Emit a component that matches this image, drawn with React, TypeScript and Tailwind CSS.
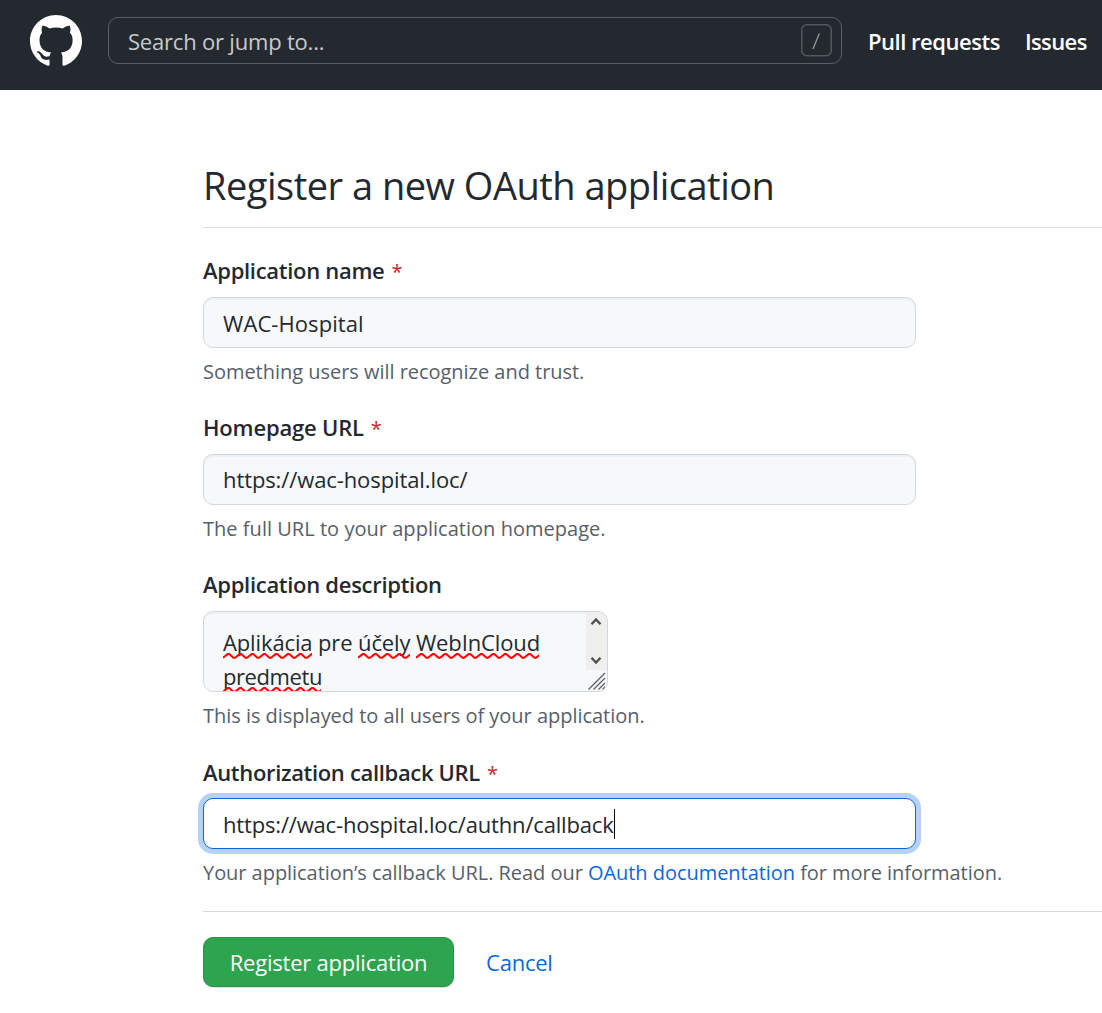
import type { ReactNode } from "react";

function Label({ children, required, className }: { children: ReactNode; required?: boolean; className: string }) {
  return (
    <div className={`flex h-[34px] items-baseline whitespace-pre text-[22px] leading-[34px] font-semibold text-[#24292f] ${className}`}>
      <span>{children}</span>
      {required && <span className="ml-[7px] text-[20px] font-normal tracking-normal text-[#cf222e]">*</span>}
    </div>
  );
}

function Help({ children }: { children: ReactNode }) {
  return <p className="mt-[9px] h-[29px] whitespace-pre text-[20px] leading-[30px] tracking-[-0.03px] text-[#57606a]">{children}</p>;
}

const fieldBox =
  "flex h-[51px] w-[713px] items-center rounded-[10px] border border-[#d0d7de] bg-[#f6f8fa] pl-[19px] text-[22px] text-[#24292f] shadow-[inset_0_2px_0_rgba(208,215,222,0.2)]";

/* Spell-checker underline: one wave every 12px, clipped to the word. */
function Squiggle({ width }: { width: number }) {
  let d = "M0 4.8";
  for (let x = 0; x < width; x += 12) d += "l4.7 -3.7h1.5l4.3 3.7h1.5";
  return (
    <svg className="absolute top-[28px] left-0 h-[6px] overflow-hidden" width={width} height="6" fill="none">
      <path d={d} stroke="#ff0000" strokeWidth="2" strokeLinejoin="round" />
    </svg>
  );
}

function Misspelled({ children, width }: { children: ReactNode; width: number }) {
  return (
    <span className="relative inline-block">
      {children}
      <Squiggle width={width} />
    </span>
  );
}

export default function App() {
  return (
    <div className="h-[1013px] w-[1102px] overflow-hidden bg-white font-['Open_Sans',sans-serif] text-[#24292f]">
      <header className="flex h-[90px] items-start bg-[#24292f] text-white">
        <svg className="mt-[15px] ml-[30px] size-[52px] shrink-0" viewBox="0 0 16 16" fill="currentColor">
          <path
            fillRule="evenodd"
            d="M8 0C3.58 0 0 3.58 0 8c0 3.54 2.29 6.53 5.47 7.59.4.07.55-.17.55-.38 0-.19-.01-.82-.01-1.49-2.01.37-2.53-.49-2.69-.94-.09-.23-.48-.94-.82-1.13-.28-.15-.68-.52-.01-.53.63-.01 1.08.58 1.23.82.72 1.21 1.87.87 2.33.66.07-.52.28-.87.51-1.07-1.78-.2-3.64-.89-3.64-3.95 0-.87.31-1.59.82-2.15-.08-.2-.36-1.02.08-2.12 0 0 .67-.21 2.2.82.64-.18 1.32-.27 2-.27.68 0 1.36.09 2 .27 1.53-1.04 2.2-.82 2.2-.82.44 1.1.16 1.92.08 2.12.51.56.82 1.27.82 2.15 0 3.07-1.87 3.75-3.65 3.95.29.25.54.73.54 1.48 0 1.07-.01 1.93-.01 2.2 0 .21.15.46.55.38A8.013 8.013 0 0016 8c0-4.42-3.58-8-8-8z"
          />
        </svg>
        <div className="mt-[17px] ml-[26px] flex h-[47px] w-[734px] shrink-0 items-start justify-between rounded-[10px] border border-[#57606a] pr-[9px] pl-[19px]">
          <span className="mt-[6px] text-[22px] leading-[34px] tracking-[-0.2px] text-[#c8c9cb]">Search or jump to...</span>
          <svg className="mt-[6px] h-[33px] w-[31px]" viewBox="0 0 31 33" fill="none">
            <rect x="0.8" y="0.8" width="29.4" height="31" rx="5" stroke="#55595e" strokeWidth="1.5" />
            <path d="M18.3 9.5L12 25" stroke="#979a9c" strokeWidth="1.3" />
          </svg>
        </div>
        <nav className="mt-[24px] ml-[26px] flex gap-[25px] text-[22px] leading-[34px] font-semibold whitespace-pre">
          <a className="tracking-[-0.48px]">Pull requests</a>
          <a className="tracking-[-0.6px]">Issues</a>
        </nav>
      </header>

      <main className="ml-[203px] flex flex-col pt-[68px]">
        <h1 className="h-[70px] border-b border-[#d8dee4] text-[38px] leading-[54px] font-normal tracking-[-0.5px]">
          Register a new OAuth application
        </h1>

        <Label required className="mt-[25px] tracking-[-0.3px]">Application name</Label>
        <div className={`mt-[10px] ${fieldBox} pt-[2px] tracking-[0.08px]`}>WAC-Hospital</div>
        <Help>Something users will recognize and trust.</Help>

        <Label required className="mt-[24px] tracking-[-0.18px]">Homepage URL</Label>
        <div className={`mt-[10px] ${fieldBox} tracking-[-0.1px]`}>https://wac-hospital.loc/</div>
        <Help><span className="tracking-[0.03px]">The full URL to your application homepage.</span></Help>

        <Label className="mt-[24px] tracking-[-0.29px]">Application description</Label>
        <div className="mt-[10px] flex h-[81px] w-[405px] justify-between overflow-hidden rounded-[10px] border border-[#d0d7de] bg-[#f6f8fa] pl-[19px] text-[22px] leading-[34px] shadow-[inset_0_2px_0_rgba(208,215,222,0.2)]">
          <div className="pt-[13px] whitespace-pre">
            <div className="h-[34px] tracking-[-0.13px]">
              <Misspelled width={89}>Aplikácia</Misspelled> pre <Misspelled width={52}>účely</Misspelled>{" "}
              <Misspelled width={123}>WebInCloud</Misspelled>
            </div>
            <div className="h-[34px] tracking-[-0.42px]">
              <Misspelled width={98}>predmetu</Misspelled>
            </div>
          </div>
          <div className="flex w-[21px] flex-col">
            <div className="flex h-[58px] flex-col items-center justify-between bg-[#efefef] py-[5px] pr-[2px]">
              <svg width="12" height="9" fill="none"><path d="M1.500 7.200L6 2.400l4.500 4.800" stroke="#505050" strokeWidth="2.4" /></svg>
              <svg width="12" height="9" fill="none"><path d="M1.500 1.800L6 6.600l4.500-4.800" stroke="#505050" strokeWidth="2.4" /></svg>
            </div>
            <svg width="21" height="21" fill="none">
              <path d="M2.500 19.500L19 3M7.500 19.500L19 8M12.500 19.500L19 13M16.500 19.500L19 17" stroke="#5c5f66" strokeWidth="1.3" />
            </svg>
          </div>
        </div>
        <Help>This is displayed to all users of your application.</Help>

        <Label required className="mt-[25px] tracking-[-0.33px]">Authorization callback URL</Label>
        <div className="mt-[9px] flex h-[51px] w-[713px] items-center rounded-[10px] border border-[#0969da] bg-white pl-[19px] text-[22px] tracking-[-0.17px] shadow-[0_0_0_5px_#b5d2f4]">
          <span className="pt-[2px]">https://wac-hospital.loc/authn/callback</span>
          <span className="h-[30px] w-px bg-black" />
        </div>
        <Help>
          <span className="tracking-[-0.045px]">
            Your application’s callback URL. Read our <a className="text-[#0969da]">OAuth documentation</a> for more information.
          </span>
        </Help>

        <hr className="mt-6 border-[#d0d7de]" />
        <div className="mt-[25px] flex items-center text-[22px] tracking-[-0.22px]">
          <button className="h-[50px] w-[251px] rounded-[10px] border border-[#2a9148] bg-[#2da44e] text-white shadow-[0_1px_0_rgba(27,31,36,0.15)]">
            Register application
          </button>
          <a className="ml-[32px] text-[#0969da]">Cancel</a>
        </div>
      </main>
    </div>
  );
}
